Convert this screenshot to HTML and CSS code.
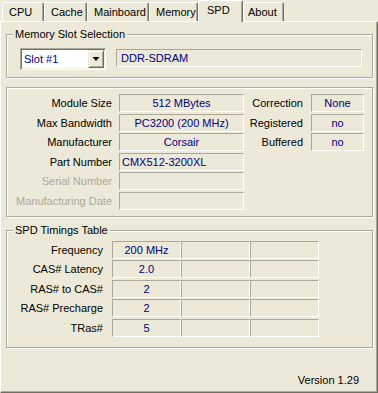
FILE: index.html
```html
<html>
  <head>
    <link rel="stylesheet" href="styles.css">
  </head>
  <body>
    <div class="tabs">
      <div class="tab tab-cpu">CPU</div>
      <div class="tab tab-cache">Cache</div>
      <div class="tab tab-board">Mainboard</div>
      <div class="tab tab-memory">Memory</div>
      <div class="tab tab-spd tab-active">SPD</div>
      <div class="tab tab-about">About</div>
    </div>
    <div class="panel">
      <fieldset class="group group-slot">
        <legend>Memory Slot Selection</legend>
        <div class="slot-row">
          <div class="combo">
            <span class="combo-text">Slot #1</span>
            <span class="combo-btn"><span class="arrow"></span></span>
          </div>
          <div class="field field-type">DDR-SDRAM</div>
        </div>
      </fieldset>

      <fieldset class="group group-module">
        <div class="module">
          <div class="info">
            <div class="label">Module Size</div>
            <div class="field center">512 MBytes</div>
            <div class="label">Max Bandwidth</div>
            <div class="field center">PC3200 (200 MHz)</div>
            <div class="label">Manufacturer</div>
            <div class="field center">Corsair</div>
            <div class="label">Part Number</div>
            <div class="field left">CMX512-3200XL</div>
            <div class="label label-off">Serial Number</div>
            <div class="field"></div>
            <div class="label label-off">Manufacturing Date</div>
            <div class="field"></div>
          </div>
          <div class="flags">
            <div class="label">Correction</div>
            <div class="field center">None</div>
            <div class="label">Registered</div>
            <div class="field center">no</div>
            <div class="label">Buffered</div>
            <div class="field center">no</div>
          </div>
        </div>
      </fieldset>

      <fieldset class="group group-timings">
        <legend>SPD Timings Table</legend>
        <div class="timings">
          <div class="label">Frequency</div>
          <div class="field center">200 MHz</div>
          <div class="field"></div>
          <div class="field"></div>
          <div class="label">CAS# Latency</div>
          <div class="field center">2.0</div>
          <div class="field"></div>
          <div class="field"></div>
          <div class="label">RAS# to CAS#</div>
          <div class="field center">2</div>
          <div class="field"></div>
          <div class="field"></div>
          <div class="label">RAS# Precharge</div>
          <div class="field center">2</div>
          <div class="field"></div>
          <div class="field"></div>
          <div class="label">TRas#</div>
          <div class="field center">5</div>
          <div class="field"></div>
          <div class="field"></div>
        </div>
      </fieldset>

      <div class="version">Version 1.29</div>
    </div>
  </body>
</html>
```

FILE: styles.css
```css
* {
  box-sizing: border-box;
}

body {
  margin: 0;
  width: 378px;
  height: 393px;
  overflow: hidden;
  background: #ECE9D8;
  color: #000;
  font: 11px "Liberation Sans", Arial, sans-serif;
}

/* tab strip */
.tabs {
  display: flex;
  align-items: flex-end;
  height: 21px;
  padding-left: 2px;
}

.tab {
  height: 19px;
  padding-left: 6px;
  line-height: 18px;
  border: 1px solid;
  border-bottom: none;
  border-color: #fff #716F64 transparent #fff;
  border-radius: 2px 2px 0 0;
  box-shadow: inset -1px 0 #ACA899;
  white-space: nowrap;
}

.tab-cpu { width: 42px; }
.tab-cache { width: 43px; }
.tab-board { width: 62px; }
.tab-memory { width: 49px; }
.tab-spd { width: 45px; }
.tab-about { width: 41px; padding-left: 4px; }

.tab-active {
  position: relative;
  z-index: 1;
  height: 22px;
  margin-bottom: -1px;
  padding-left: 8px;
  background: #ECE9D8;
}

/* page body */
.panel {
  height: 372px;
  padding: 6px 4px 0 5px;
  border: 1px solid;
  border-color: #fff #716F64 #716F64 #fff;
  box-shadow: inset -1px -1px #ACA899;
}

.group {
  margin: 0;
  padding: 0;
  min-width: 0;
  border: 1px solid #ACA899;
  box-shadow: 1px 1px #fff, inset 1px 1px #fff;
}

.group legend {
  margin-left: 6px;
  padding: 0 2px;
  line-height: 13px;
  background: #ECE9D8;
}

.group-module { margin-top: 9px; }
.group-timings { margin-top: 7px; }

/* slot selection */
.slot-row {
  display: flex;
  align-items: flex-start;
  padding: 7px 10px 7px 13px;
}

.combo {
  display: flex;
  width: 86px;
  height: 22px;
  padding: 1px;
  background: #fff;
  border: 1px solid;
  border-color: #ACA899 #fff #fff #ACA899;
  box-shadow: inset 1px 1px #716F64, inset -1px -1px #F1EFE2;
}

.combo-text {
  flex: 1;
  padding-left: 2px;
  line-height: 18px;
  color: #000080;
}

.combo-btn {
  display: flex;
  align-items: center;
  justify-content: center;
  width: 16px;
  height: 18px;
  background: #ECE9D8;
  border: 1px solid;
  border-color: #ECE9D8 #716F64 #716F64 #ECE9D8;
  box-shadow: inset 1px 1px #fff, inset -1px -1px #ACA899;
}

.arrow {
  width: 7px;
  height: 4px;
  background: #000;
  clip-path: polygon(0 0, 100% 0, 50% 100%);
}

.field {
  height: 18px;
  line-height: 16px;
  color: #000080;
  white-space: nowrap;
  overflow: hidden;
  border: 1px solid;
  border-color: #ACA899 #fff #fff #ACA899;
}

.field-type {
  flex: 1;
  margin: 1px 0 0 10px;
  padding-left: 4px;
}

.center { text-align: center; }
.left { padding-left: 2px; }

/* module info */
.module {
  display: flex;
  padding: 6px 0;
}

.info,
.flags {
  display: grid;
  grid-auto-rows: 18px;
  row-gap: 1.6px;
  align-content: start;
}

.info { grid-template-columns: 112px 125px; }
.flags { grid-template-columns: 67px 53px; }

.label {
  padding-right: 7px;
  line-height: 18px;
  text-align: right;
  white-space: nowrap;
}

.flags .label { padding-right: 8px; }
.label-off { color: #ACA899; }

/* timings */
.timings {
  display: grid;
  grid-template-columns: 105px 69px 69px 69px;
  grid-auto-rows: 18px;
  row-gap: 1.5px;
  padding: 4px 0 10px;
}

.timings .label { padding-right: 9px; }

.version {
  margin-top: 26px;
  padding-right: 14px;
  line-height: 13px;
  text-align: right;
}
```
